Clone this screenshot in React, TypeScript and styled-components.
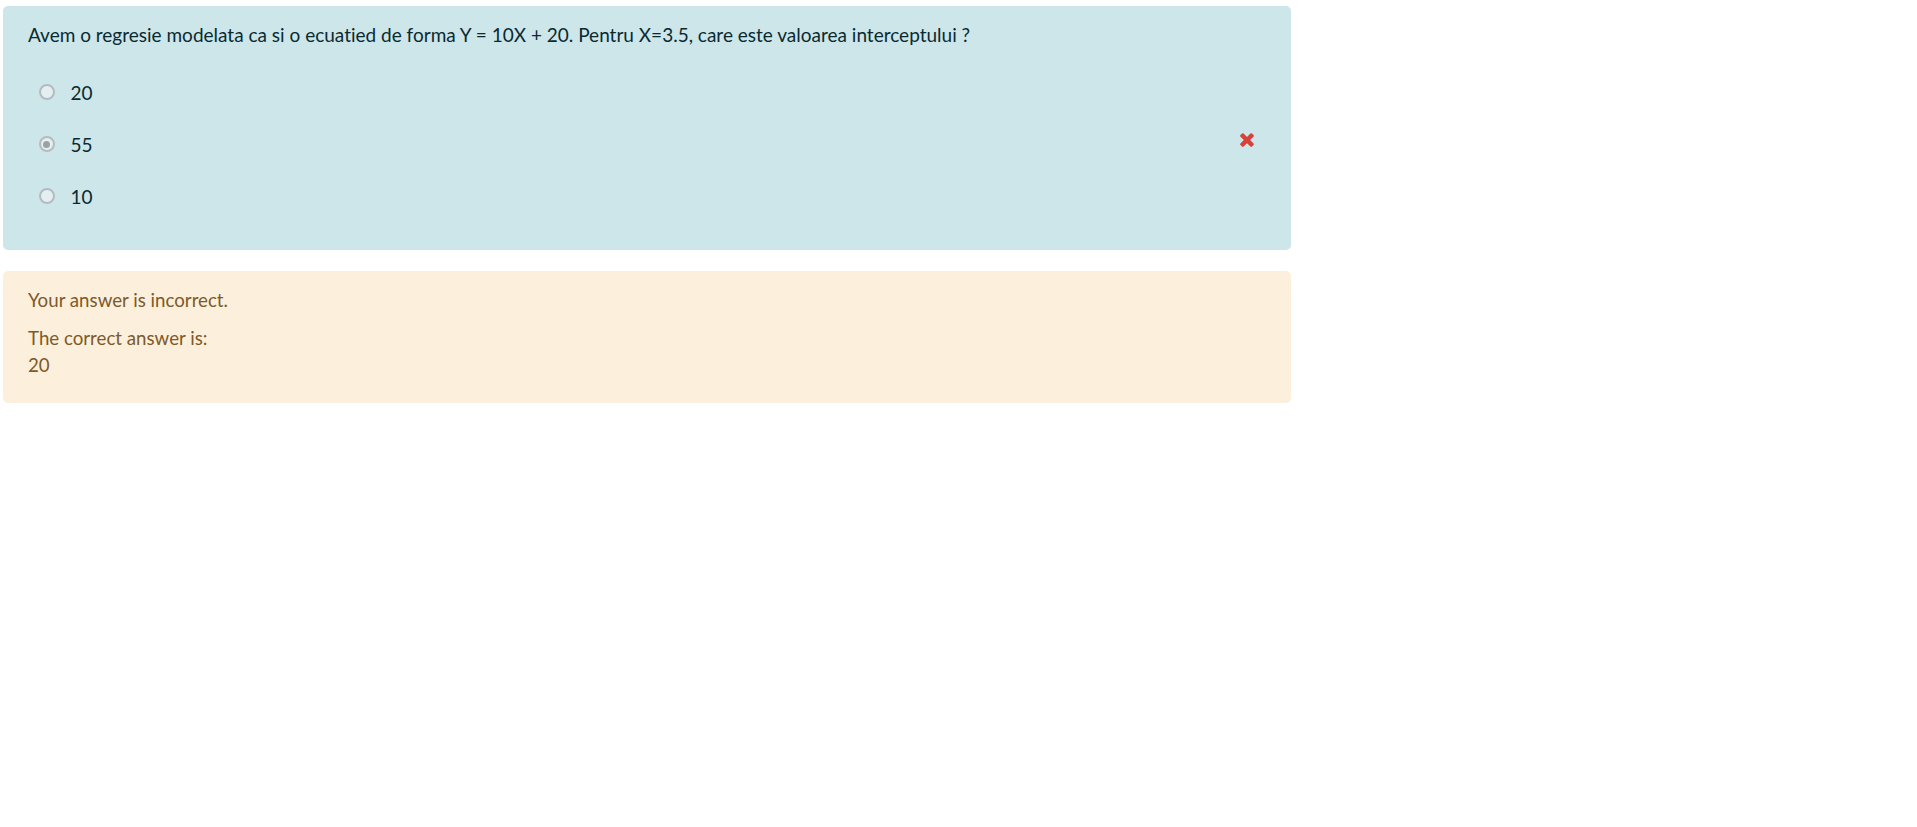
import React from "react";
import styled, { createGlobalStyle } from "styled-components";

const Global = createGlobalStyle`
  html, body { margin: 0; padding: 0; background: #ffffff; }
  body {
    font-family: "Lato", "Liberation Sans", sans-serif;
    font-variant-ligatures: none;
    font-feature-settings: "liga" 0;
  }
`;

const Page = styled.div`
  width: 1288px;
  padding: 6px 0 0 3px;
  display: flex;
  flex-direction: column;
  gap: 21px;
`;

const Formulation = styled.div`
  background: #cce6ea;
  color: #0a2a30;
  border-radius: 5px;
  padding: 15px 25px 40px 25px;
  font-size: 19px;
  line-height: 27px;
`;

const QText = styled.div`
  margin-bottom: 30.5px;
`;

const Options = styled.div`
  display: flex;
  flex-direction: column;
  gap: 25px;
  padding-left: 11px;
`;

const OptionRow = styled.div`
  display: flex;
  align-items: center;
  height: 27px;
`;

const Radio = styled.span<{ $checked?: boolean }>`
  width: 16px;
  height: 16px;
  box-sizing: border-box;
  border-radius: 50%;
  border: 2px solid #b4bcc1;
  background: #e3eff1;
  display: flex;
  align-items: center;
  justify-content: center;
  margin-right: 16px;
  margin-left: -0.5px;
  flex-shrink: 0;
  &::after {
    content: "";
    display: ${(p) => (p.$checked ? "block" : "none")};
    width: 7px;
    height: 7px;
    border-radius: 50%;
    background: #9aa1a8;
  }
`;

const Label = styled.span`
  flex: 1;
`;

const WrongIcon = styled.svg`
  width: 14px;
  height: 15px;
  margin-right: 12px;
  align-self: flex-start;
  margin-top: 1.5px;
`;

const Outcome = styled.div`
  background: #fcefdc;
  color: #7d5a29;
  border-radius: 5px;
  padding: 16px 25px 24px 25px;
  font-size: 18.7px;
  line-height: 27px;
`;

const Para = styled.div<{ $gap?: number }>`
  margin-bottom: ${(p) => p.$gap ?? 0}px;
`;

const options = [
  { label: "20", checked: false, wrong: false },
  { label: "55", checked: true, wrong: true },
  { label: "10", checked: false, wrong: false },
];

export default function App() {
  return (
    <>
      <Global />
      <Page>
        <Formulation>
          <QText>
            Avem o regresie modelata ca si o ecuatied de forma Y = 10X + 20. Pentru X=3.5, care este valoarea interceptului ?
          </QText>
          <Options>
            {options.map((o) => (
              <OptionRow key={o.label}>
                <Radio $checked={o.checked} />
                <Label>{o.label}</Label>
                {o.wrong && (
                  <WrongIcon viewBox="290 290 1212 1248">
                    <path
                      d="M1490 1322q0 40-28 68l-136 136q-28 28-68 28t-68-28l-294-294-294 294q-28 28-68 28t-68-28l-136-136q-28-28-28-68t28-68l294-294-294-294q-28-28-28-68t28-68l136-136q28-28 68-28t68 28l294 294 294-294q28-28 68-28t68 28l136 136q28 28 28 68t-28 68l-294 294 294 294q28 28 28 68z"
                      fill="#d9403a"
                    />
                  </WrongIcon>
                )}
              </OptionRow>
            ))}
          </Options>
        </Formulation>
        <Outcome>
          <Para $gap={11}>Your answer is incorrect.</Para>
          <Para>The correct answer is:</Para>
          <Para>20</Para>
        </Outcome>
      </Page>
    </>
  );
}
